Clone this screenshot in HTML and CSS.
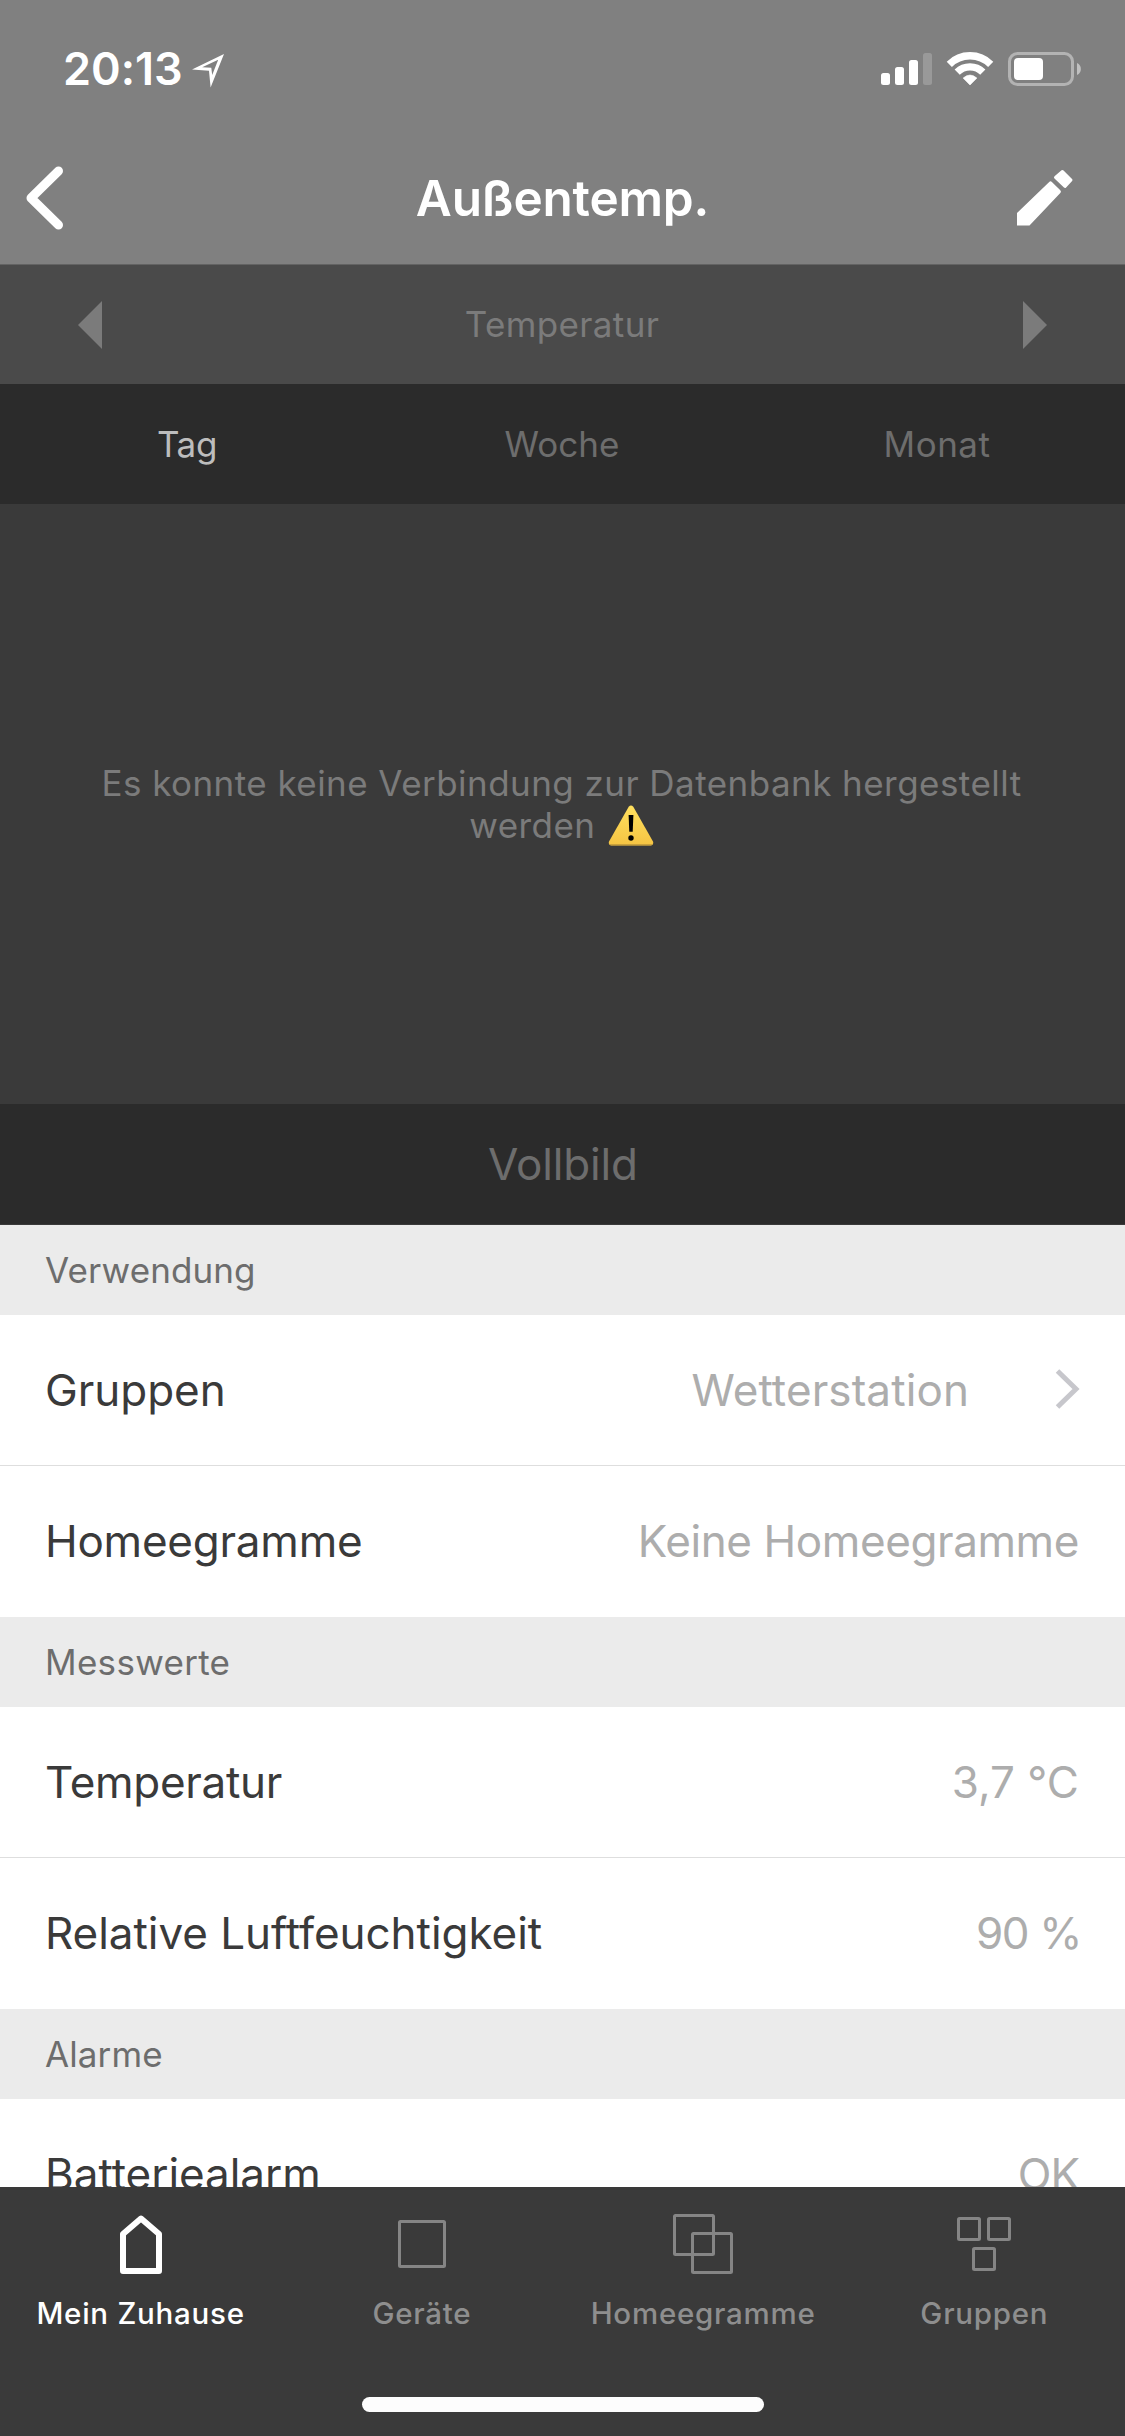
FILE: index.html
```
<!DOCTYPE html>
<html lang="de">
<head>
<meta charset="utf-8">
<title>Außentemp.</title>
<link rel="stylesheet" href="styles.css">
</head>
<body>
<div class="screen">
  <header class="header">
    <div class="status">
      <span class="time">20:13</span>
      <svg class="location" width="34" height="36" viewBox="0 0 34 36"><path fill="#fff" fill-rule="evenodd" d="M33 1 19.6 34.5 18 17.8 1 16.6ZM27.2 6.8 11.2 14.3 20.3 14.8 21.2 22Z"/></svg>
      <svg class="signals" width="202" height="36" viewBox="0 0 202 36">
        <g fill="#fff">
          <rect x="1" y="22" width="9" height="12" rx="2.5"/>
          <rect x="15" y="16" width="9" height="18" rx="2.5"/>
          <rect x="29" y="9" width="9" height="25" rx="2.5"/>
          <rect x="43" y="2" width="9" height="32" rx="2.5" opacity=".2"/>
          <path d="M90 34 83.1 27.1Q90 21 96.9 27.1Z" stroke="#fff" stroke-width=".6"/>
          <rect x="134" y="7" width="29" height="22" rx="4"/>
          <path d="M197 12a6.6 6.6 0 0 1 0 12z" opacity=".5"/>
        </g>
        <g fill="none" stroke="#fff">
          <path stroke-width="7.3" d="M69.3 13.3a29.3 29.3 0 0 1 41.4 0M77.2 21.2a18.1 18.1 0 0 1 25.6 0"/>
          <rect x="129.5" y="2.5" width="63" height="31" rx="8" stroke-width="3" opacity=".4"/>
        </g>
      </svg>
    </div>
    <div class="navbar">
      <svg width="40" height="66" viewBox="0 0 40 66"><path d="M34.5 6 7 33 34.5 60" fill="none" stroke="#fff" stroke-width="9" stroke-linecap="round" stroke-linejoin="round"/></svg>
      <h1 class="title">Außentemp.</h1>
      <svg class="pencil" width="58" height="58" viewBox="0 0 58 58"><path fill="#fff" stroke="#fff" stroke-width="3" stroke-linejoin="round" d="M46.5 3.5 55 12 49 18.5 39.500 9.500Z"/><path fill="#fff" d="M1 45 33.2 13.9Q34.5 12.5 35.9 13.9L44.3 22.3Q45.7 23.7 44.3 25.1L13.5 57.5H1Z"/></svg>
    </div>
  </header>

  <section class="selector">
    <svg width="24" height="48" viewBox="0 0 24 48"><path fill="#7b7b7b" d="M24 0V48L0 24Z"/></svg>
    <span class="selector-name">Temperatur</span>
    <svg width="24" height="48" viewBox="0 0 24 48"><path fill="#7b7b7b" d="M0 0V48L24 24Z"/></svg>
  </section>

  <nav class="ranges">
    <span class="range active">Tag</span>
    <span class="range">Woche</span>
    <span class="range wide">Monat</span>
  </nav>

  <section class="chart">
    <p class="message">Es konnte keine Verbindung zur Datenbank hergestellt<br>werden <svg class="warning" width="46" height="41" viewBox="0 0 46 41"><defs><linearGradient id="sign" x1="0" y1="0" x2="0" y2="1"><stop offset="0" stop-color="#ffe05e"/><stop offset="1" stop-color="#f5c443"/></linearGradient></defs><path d="M20.7 1.8Q23 -1 25.3 1.8L45 36.5Q46 40.3 42.8 40.5H3.2Q0 40.3 1 36.5Z" fill="url(#sign)"/><path d="M2 39.8H44" stroke="#b8933a"/><path d="M20.6 10H25.4L24.7 26.8H21.3Z"/><circle cx="23" cy="33" r="2.7"/></svg></p>
  </section>

  <div class="fullscreen">Vollbild</div>

  <main class="list">
    <h2 class="heading">Verwendung</h2>
    <div class="row divided"><span class="label">Gruppen</span><span class="value group">Wetterstation</span><svg class="chevron" width="25" height="40" viewBox="0 0 25 40"><path d="M2.5 2 21 20 2.5 38" fill="none" stroke="#c7c7cc" stroke-width="5"/></svg></div>
    <div class="row"><span class="label tight">Homeegramme</span><span class="value tighter">Keine Homeegramme</span></div>
    <h2 class="heading wide">Messwerte</h2>
    <div class="row divided"><span class="label tighter">Temperatur</span><span class="value">3,7 °C</span></div>
    <div class="row"><span class="label">Relative Luftfeuchtigkeit</span><span class="value percent">90 %</span></div>
    <h2 class="heading">Alarme</h2>
    <div class="row"><span class="label">Batteriealarm</span><span class="value ok">OK</span></div>
  </main>

  <footer class="footer">
    <nav class="tabs">
      <div class="tab active"><svg width="64" height="64" viewBox="0 0 64 64"><path d="M32 6.5 50 22V59H14V22Z" stroke-width="6"/></svg><span>Mein Zuhause</span></div>
      <div class="tab"><svg width="64" height="64" viewBox="0 0 64 64"><rect x="9.5" y="9.5" width="45" height="45" rx="1"/></svg><span>Geräte</span></div>
      <div class="tab"><svg width="64" height="64" viewBox="0 0 64 64"><rect x="3.5" y="3.5" width="39" height="39" rx="1"/><rect x="21.5" y="21.5" width="39" height="39" rx="1"/></svg><span>Homeegramme</span></div>
      <div class="tab"><svg width="64" height="64" viewBox="0 0 64 64"><rect x="6.5" y="6.5" width="21" height="21" rx="1"/><rect x="36.5" y="6.5" width="21" height="21" rx="1"/><rect x="21.5" y="36.5" width="21" height="21" rx="1"/></svg><span>Gruppen</span></div>
    </nav>
    <div class="home-indicator"></div>
  </footer>
</div>
</body>
</html>
```

FILE: styles.css
```
* { box-sizing: border-box; }
body {
  margin: 0;
  font-family: Inter, "Liberation Sans", sans-serif;
  font-variant-ligatures: none;
}
svg { display: block; flex: none; }
h1, h2, p { margin: 0; font-weight: 400; }

.screen {
  display: flex;
  flex-direction: column;
  width: 1125px;
  height: 2436px;
  overflow: hidden;
  background: #fff;
}

.header {
  flex: none;
  height: 265px;
  background: #808080;
  border-bottom: 1px solid #636363;
  color: #fff;
}
.status {
  display: flex;
  align-items: center;
  height: 132px;
  padding: 6px 43px 0 63px;
}
.time { font-size: 45px; font-weight: 600; line-height: 54px; }
.location { margin: 4px 0 0 8px; }
.signals { margin-left: auto; }
.navbar {
  display: grid;
  grid-template-columns: 60px 1fr 60px;
  align-items: center;
  height: 132px;
  padding: 0 49px 0 24px;
}
.pencil { margin-top: -3px; }
.title {
  font-size: 49.5px;
  font-weight: 600;
  letter-spacing: -.19px;
  text-align: center;
  padding-left: 25px;
}

.selector {
  flex: none;
  display: flex;
  align-items: center;
  justify-content: space-between;
  height: 119px;
  padding: 0 78px;
  background: #4a4a4a;
  color: #7b7b7b;
  font-size: 35px;
}
.selector-name { margin: 0 1px 2px 0; letter-spacing: .36px; }

.ranges {
  flex: none;
  display: grid;
  grid-template-columns: repeat(3, 1fr);
  align-items: center;
  height: 120px;
  background: #2b2b2b;
  color: #6d6d6d;
  font-size: 35px;
  text-align: center;
}
.range { padding-right: 1px; }
.range.active { color: #bdbdbd; letter-spacing: -.3px; }

.chart {
  flex: none;
  display: flex;
  align-items: center;
  justify-content: center;
  height: 600px;
  padding-right: 2px;
  background: #3a3a3a;
}
.message {
  color: #7b7b7b;
  font-size: 35px;
  line-height: 42px;
  letter-spacing: .45px;
  text-align: center;
}
.warning { display: inline-block; margin: -8px 0 -7px 2px; vertical-align: -7px; transform: translateY(-6px); }

.fullscreen {
  flex: none;
  height: 121px;
  padding-left: 1px;
  border-bottom: 1px solid #3a3a3a;
  background: #2b2b2b;
  color: #6d6d6d;
  font-size: 44px;
  line-height: 120px;
  letter-spacing: -.15px;
  text-align: center;
}

.list { flex: 1; min-height: 0; overflow: hidden; }
.heading {
  height: 90px;
  padding-left: 45px;
  background: #ebebeb;
  color: #6d6d6d;
  font-size: 35px;
  line-height: 90px;
  letter-spacing: .1px;
}
.heading.wide { letter-spacing: .3px; }
.wide { letter-spacing: .5px; }
.row {
  display: flex;
  align-items: center;
  height: 151px;
  padding: 0 46px 2px 45px;
  font-size: 44px;
}
.row.divided { padding-bottom: 0; border-bottom: 1px solid #dedede; }
.chevron { margin: -2px -1px 0 0; }
.label { color: #3a3a3a; letter-spacing: -.05px; }
.value { margin-left: auto; color: #adadad; }
.value.group { margin-right: 86px; letter-spacing: .1px; }
.label.tight { letter-spacing: -.23px; }
.tighter { letter-spacing: -.4px; }
.label.tighter { letter-spacing: -.3px; }
.percent { margin-right: -2px; letter-spacing: -1.4px; }
.ok { letter-spacing: -1px; }

.footer {
  flex: none;
  height: 249px;
  padding-top: 25px;
  background: #3a3a3a;
}
.tabs { display: grid; grid-template-columns: repeat(4, 1fr); height: 185px; }
.tab {
  display: flex;
  flex-direction: column;
  align-items: center;
  gap: 19px;
  color: #8e8e8e;
  font-size: 29.5px;
  font-weight: 500;
  line-height: 36px;
  letter-spacing: .75px;
}
.tab.active { color: #fff; }
.tab svg { fill: none; stroke: #858585; stroke-width: 3; stroke-linejoin: round; }
.tab.active svg { stroke: #fff; }
.home-indicator {
  width: 402px;
  height: 15px;
  margin: 0 auto;
  border-radius: 8px;
  background: #fdfdfd;
}
```
